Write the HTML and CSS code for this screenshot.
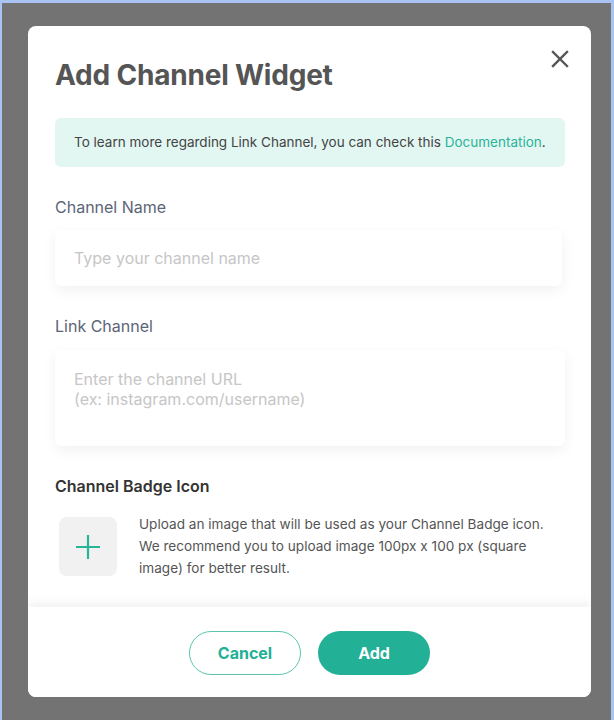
FILE: index.html
```html
<!DOCTYPE html>
<html lang="en">
<head>
  <meta charset="UTF-8">
  <meta name="viewport" content="width=device-width, initial-scale=1.0">
  <title>Add Channel Widget</title>
  <link rel="stylesheet" href="styles.css">
</head>
<body>
  <div class="overlay">
    <div class="modal">
      <button class="close" aria-label="Close">
        <svg width="18" height="18" viewBox="0 0 18 18">
          <path d="M2 2 L16 16 M16 2 L2 16" stroke="#555" stroke-width="2.4" stroke-linecap="square" fill="none"/>
        </svg>
      </button>
      <div class="modal-body">
        <h1 class="title">Add Channel Widget</h1>
        <div class="info">To learn more regarding Link Channel, you can check this <a href="#">Documentation</a>.</div>

        <label class="field-label" for="name">Channel Name</label>
        <input class="field" id="name" type="text" placeholder="Type your channel name">

        <label class="field-label" for="link">Link Channel</label>
        <textarea class="field area" id="link" placeholder="Enter the channel URL&#10;(ex: instagram.com/username)"></textarea>

        <div class="badge-label">Channel Badge Icon</div>
        <div class="upload">
          <div class="upload-box">
            <svg width="26" height="26" viewBox="0 0 26 26">
              <path d="M13 1 V25 M1 13 H25" stroke="#2bb398" stroke-width="2.2" fill="none"/>
            </svg>
          </div>
          <p class="upload-text">Upload an image that will be used as your Channel Badge icon. We recommend you to upload image 100px x 100 px (square image) for better result.</p>
        </div>
      </div>
      <div class="modal-footer">
        <button class="btn btn-outline">Cancel</button>
        <button class="btn btn-fill">Add</button>
      </div>
    </div>
  </div>
</body>
</html>
```

FILE: styles.css
```css
html, body {
  margin: 0;
  height: 100%;
}
body {
  background: #a9c4f2;
  font-family: Inter, "Liberation Sans", sans-serif;
  overflow: hidden;
}
.overlay {
  margin: 3px 3px 0 2px;
  height: 717px;
  background: #737373;
  padding: 23px 0 0 26px;
  box-sizing: border-box;
}
.modal {
  position: relative;
  width: 563px;
  height: 671px;
  background: #fff;
  border-radius: 8px;
  display: flex;
  flex-direction: column;
  overflow: hidden;
}
.close {
  position: absolute;
  top: 24px;
  right: 22px;
  width: 18px;
  height: 18px;
  padding: 0;
  border: 0;
  background: none;
  cursor: pointer;
}
.close svg {
  display: block;
}
.modal-body {
  flex: 1;
  overflow: hidden;
  padding: 0 26px 0 27px;
}
.title {
  margin: 32px 0 0;
  font-size: 28px;
  line-height: 34px;
  font-weight: 700;
  color: #555;
  letter-spacing: -0.2px;
}
.info {
  margin-top: 26px;
  background: #e2f7f2;
  border-radius: 6px;
  padding: 15px 19px;
  font-size: 13.5px;
  line-height: 19px;
  color: #444;
  white-space: nowrap;
}
.info a {
  color: #2bb398;
  text-decoration: none;
}
.field-label {
  display: block;
  margin-top: 30px;
  font-size: 16px;
  line-height: 20px;
  color: #5b6577;
}
.field {
  display: block;
  box-sizing: border-box;
  width: 507px;
  height: 56px;
  margin-top: 13px;
  padding: 0 19px;
  border: 0;
  border-radius: 6px;
  background: #fff;
  box-shadow: 0 4px 14px rgba(0, 0, 0, 0.06);
  font-family: inherit;
  font-size: 16px;
  color: #333;
  outline: none;
}
.field::placeholder {
  color: #c6c6c6;
}
.area {
  width: 510px;
  height: 96px;
  margin-top: 14px;
  padding: 19px 19px;
  line-height: 20px;
  resize: none;
}
.badge-label {
  margin-top: 30px;
  font-size: 16px;
  line-height: 20px;
  font-weight: 600;
  color: #333;
}
.upload {
  display: flex;
  align-items: flex-start;
  gap: 22px;
  margin-top: 17px;
  padding-left: 4px;
}
.upload-box {
  flex: none;
  width: 58px;
  height: 59px;
  margin-top: 4px;
  border-radius: 8px;
  background: #f1f1f1;
  display: flex;
  align-items: center;
  justify-content: center;
}
.upload-text {
  margin: 0;
  font-size: 13.6px;
  line-height: 22px;
  color: #555;
}
.modal-footer {
  flex: none;
  height: 90px;
  box-sizing: border-box;
  padding-top: 24px;
  display: flex;
  justify-content: center;
  gap: 17px;
  background: #fff;
  box-shadow: 0 -5px 9px rgba(0, 0, 0, 0.05);
}
.btn {
  width: 112px;
  height: 44px;
  border-radius: 22px;
  font-family: inherit;
  font-size: 16px;
  font-weight: 700;
  cursor: pointer;
  box-sizing: border-box;
}
.btn-outline {
  background: #fff;
  border: 1.5px solid #5cc4ae;
  color: #22b097;
}
.btn-fill {
  background: #22b097;
  border: 0;
  color: #fff;
}
```
